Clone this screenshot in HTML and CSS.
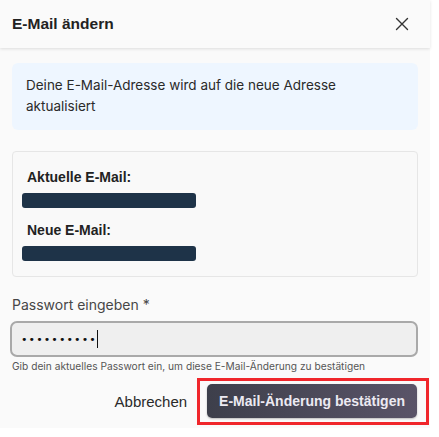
FILE: index.html
```html
<!DOCTYPE html>
<html lang="de">
<head>
<meta charset="utf-8">
<link rel="stylesheet" href="styles.css">
</head>
<body>
<div class="modal">
  <div class="header">
    <h1 class="title">E-Mail ändern</h1>
    <button class="close" aria-label="Schließen">
      <svg width="14" height="14" viewBox="0 0 14 14"><path d="M1.5 1.5 L12.5 12.5 M12.5 1.5 L1.5 12.5" stroke="#333" stroke-width="1.4" fill="none" stroke-linecap="round"/></svg>
    </button>
  </div>
  <div class="body">
    <div class="info">Deine E-Mail-Adresse wird auf die neue Adresse aktualisiert</div>
    <div class="card">
      <div class="label">Aktuelle E-Mail:</div>
      <div class="redact"></div>
      <div class="label second">Neue E-Mail:</div>
      <div class="redact"></div>
    </div>
    <div class="field">
      <label class="flabel">Passwort eingeben *</label>
      <div class="input"><span class="dots">••••••••••</span><span class="caret"></span></div>
      <div class="help">Gib dein aktuelles Passwort ein, um diese E-Mail-Änderung zu bestätigen</div>
    </div>
    <div class="actions">
      <button class="cancel">Abbrechen</button>
      <div class="highlight"><button class="primary">E-Mail-Änderung bestätigen</button></div>
    </div>
  </div>
</div>
</body>
</html>
```
FILE: styles.css
```css
* { box-sizing: border-box; }
html, body { margin: 0; padding: 0; background: #ffffff; }
body { font-family: Inter, "Noto Sans", sans-serif; color: #222; }
.modal {
  width: 430px;
  height: 428px;
  background: #fafafa;
  display: flex;
  flex-direction: column;
}
.header {
  height: 48px;
  display: flex;
  align-items: center;
  justify-content: space-between;
  padding: 0 21px 0 12px;
  box-shadow: 0 1px 3px rgba(0,0,0,0.12);
  position: relative;
}
.title {
  margin: 0;
  font-family: "Liberation Sans", Arial, sans-serif;
  font-size: 15.5px;
  font-weight: 700;
  color: #222;
}
.close {
  border: 0;
  background: none;
  padding: 0;
  width: 14px;
  height: 14px;
  display: flex;
}
.body {
  padding: 15px 12px 0 12px;
  display: flex;
  flex-direction: column;
}
.info {
  background: #eef6ff;
  border-radius: 6px;
  padding: 12px 14px 14px 14px;
  font-size: 13.5px;
  line-height: 21px;
  color: #2a2a2a;
  height: 67px;
}
.card {
  margin-top: 21px;
  background: #f9f9f9;
  border: 1px solid #e6e6e6;
  border-radius: 4px;
  height: 126px;
  padding: 15px 9px 0 9px;
}
.label {
  font-family: "Liberation Sans", Arial, sans-serif;
  font-size: 14px;
  font-weight: 700;
  color: #222;
  line-height: 20px;
  padding-left: 5px;
}
.label.second { margin-top: 12px; }
.redact {
  margin-top: 6px;
  width: 174px;
  height: 15px;
  background: #1e3348;
  border-radius: 3px;
}
.field { margin-top: 18px; }
.flabel {
  display: block;
  font-size: 14px;
  color: #474747;
  line-height: 20px;
}
.input {
  margin-top: 6px;
  height: 36px;
  margin-left: -2px;
  border: 2px solid #a9a9a9;
  border-radius: 7px;
  background: #efefef;
  display: flex;
  align-items: center;
  padding-left: 9px;
}
.dots {
  font-size: 11px;
  letter-spacing: 1.1px;
  color: #111;
  font-family: "DejaVu Sans", sans-serif;
}
.caret {
  width: 1px;
  height: 18px;
  background: #111;
}
.help {
  margin-top: 2px;
  font-size: 10.2px;
  color: #555;
  line-height: 14px;
  white-space: nowrap;
}
.actions {
  margin-top: 5px;
  display: flex;
  justify-content: flex-end;
  align-items: center;
  margin-right: -11px;
}
.cancel {
  border: 0;
  background: none;
  font-family: "Liberation Sans", Arial, sans-serif;
  font-size: 15px;
  font-weight: 400;
  color: #2a2a2a;
  padding: 0;
  margin-right: 10px;
}
.highlight {
  border: 3px solid #f0262b;
  padding: 3px 9px 4px 7px;
  display: flex;
}
.primary {
  border: 0;
  height: 34px;
  padding: 0 12px;
  border-radius: 5px;
  background: linear-gradient(90deg, #3d3f4b, #5a5468);
  color: #eceaf2;
  font-family: "Liberation Sans", Arial, sans-serif;
  font-size: 14px;
  font-weight: 700;
  box-shadow: 0 1px 2px rgba(0,0,0,0.25);
}
```
